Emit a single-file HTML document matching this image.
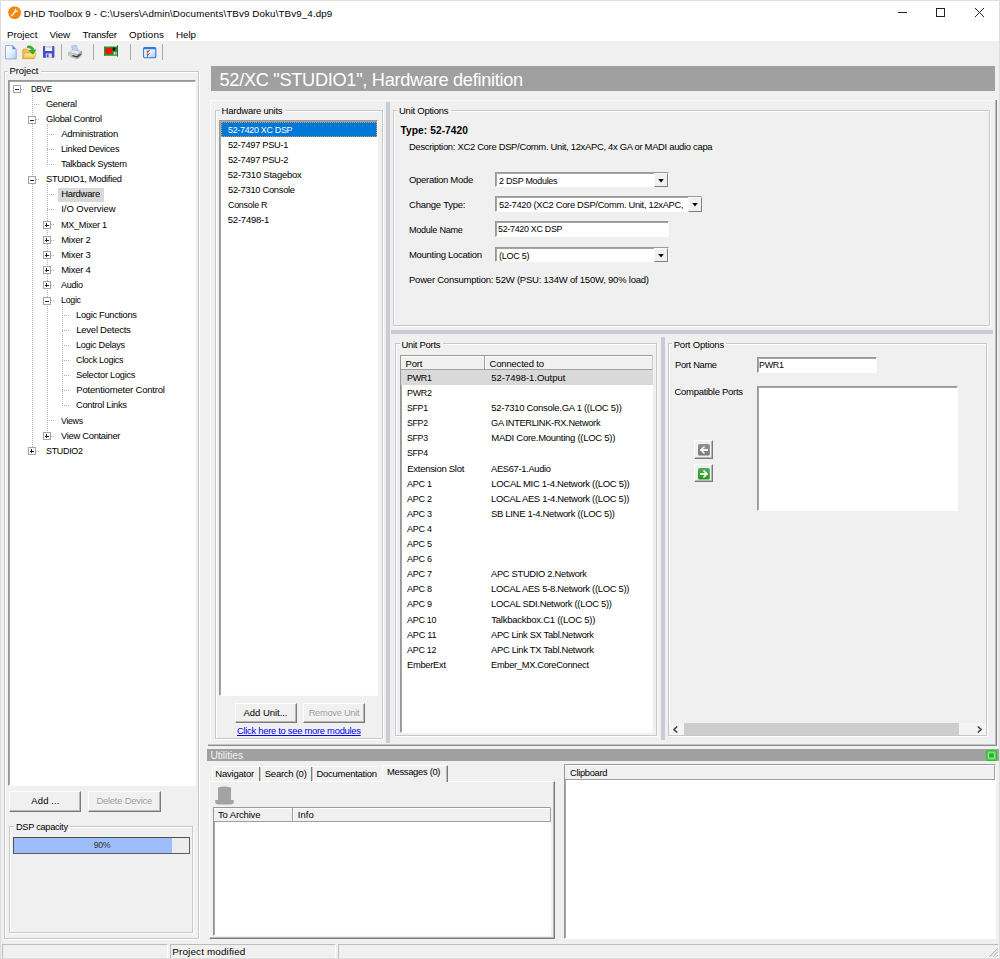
<!DOCTYPE html>
<html><head><meta charset="utf-8"><title>DHD Toolbox 9</title>
<style>
html,body{margin:0;padding:0}
body{width:1000px;height:959px;background:#f0f0f0;position:relative;overflow:hidden;font-family:"Liberation Sans",sans-serif;font-size:9.5px;color:#000}
div,span,svg{position:absolute;display:block}
span{white-space:nowrap}
</style></head><body>
<div style="left:0px;top:0px;width:1000px;height:41px;background:#fff"></div>
<svg style="left:7.6px;top:6.2px" width="14" height="14" viewBox="0 0 14 14"><circle cx="6.6" cy="6.6" r="6.45" fill="#f5870f"/><path d="M3.6 9.8 L6.9 5.8" stroke="#f3ede6" stroke-width="1.5" stroke-linecap="round"/><path d="M6.9 5.8 L7.6 3.2 M6.9 5.8 L9.6 4.9" stroke="#f3ede6" stroke-width="1.3" stroke-linecap="round"/></svg>
<span style="left:23.8px;top:7.20px;line-height:13px;font-size:9.8px;color:#000;letter-spacing:0.108px;">DHD Toolbox 9 - C:\Users\Admin\Documents\TBv9 Doku\TBv9_4.dp9</span>
<div style="left:898px;top:12px;width:9px;height:1px;background:#222"></div>
<div style="left:936px;top:8px;width:9px;height:9px;border:1px solid #222;box-sizing:border-box"></div>
<svg style="left:974px;top:7px" width="11" height="11" viewBox="0 0 11 11"><path d="M1 1 L10 10 M10 1 L1 10" stroke="#222" stroke-width="1" fill="none"/></svg>
<span style="left:7px;top:27.70px;line-height:13px;font-size:9.8px;color:#000;letter-spacing:0.000px;">Project</span>
<span style="left:49.5px;top:27.70px;line-height:13px;font-size:9.8px;color:#000;letter-spacing:-0.188px;">View</span>
<span style="left:82.5px;top:27.70px;line-height:13px;font-size:9.8px;color:#000;letter-spacing:-0.232px;">Transfer</span>
<span style="left:129px;top:27.70px;line-height:13px;font-size:9.8px;color:#000;letter-spacing:0.206px;">Options</span>
<span style="left:176px;top:27.70px;line-height:13px;font-size:9.8px;color:#000;letter-spacing:-0.052px;">Help</span>
<svg style="left:4.8px;top:44.8px" width="12" height="15" viewBox="0 0 12 15"><defs><linearGradient id="gd" x1="0" y1="0" x2="1" y2="1"><stop offset="0" stop-color="#ffffff"/><stop offset="0.55" stop-color="#e4f0fd"/><stop offset="1" stop-color="#a9cdf6"/></linearGradient></defs><path d="M0.5 0.5 H7.6 L11.2 4.1 V13.9 H0.5z" fill="url(#gd)" stroke="#93a3dd" stroke-width="0.9"/><path d="M7.4 0.6 L11.1 4.3 H7.4z" fill="#5a8be2"/></svg>
<svg style="left:22px;top:44.6px" width="15" height="15" viewBox="0 0 15 15"><defs><linearGradient id="gf" x1="0" y1="0" x2="0" y2="1"><stop offset="0" stop-color="#fdf0b0"/><stop offset="1" stop-color="#f0c040"/></linearGradient></defs><path d="M0.8 5 Q0.8 4 1.8 4 H4.6 L6 5.5 H11 Q12 5.5 12 6.5 V13.4 H0.8z" fill="#efc24a" stroke="#d2a02c" stroke-width="0.7"/><path d="M2.6 8 H13.4 Q14.4 8 14 9 L12.3 13.6 H0.8z" fill="url(#gf)" stroke="#d2a02c" stroke-width="0.7"/><path d="M5.3 1.3 C8.8 0 11.8 2.2 11.9 5.2 L14 4.8 L10.9 9.2 L7.2 5.6 L9.4 5.5 C9.2 3.6 7.6 2.5 5.3 2.9z" fill="#35b028" stroke="#218a18" stroke-width="0.5"/></svg>
<svg style="left:42.7px;top:45.8px" width="12" height="12" viewBox="0 0 12 12"><rect x="0" y="0" width="11.4" height="11.8" rx="0.9" fill="#484ec3"/><rect x="2.1" y="0.3" width="7.1" height="4.7" fill="#f3f3f3"/><rect x="2.1" y="0.3" width="7.1" height="1.6" fill="#d4d4d8"/><rect x="2.8" y="7.5" width="6" height="4.3" fill="#e3e4f8"/><rect x="3.7" y="8.3" width="1.9" height="2.9" fill="#484ec3"/></svg>
<div style="left:61px;top:44px;width:1px;height:15.5px;background:#a8a8a8"></div>
<svg style="left:67.6px;top:45px" width="15" height="15" viewBox="0 0 15 15"><path d="M3.6 0.9 L8.3 0.4 L10.2 5.8 L5 6.6z" fill="#b9d6f9" stroke="#86acdf" stroke-width="0.6"/><path d="M0.6 7.6 L4.6 5 L13.6 6.4 L9.8 9.6z" fill="#ececec" stroke="#a6a6a6" stroke-width="0.5"/><path d="M0.6 7.6 L9.8 9.6 V13.4 L0.6 10.6z" fill="#cfcfcf" stroke="#9a9a9a" stroke-width="0.5"/><path d="M9.8 9.6 L13.6 6.4 V9.8 L9.8 13.4z" fill="#9c9c9c" stroke="#8a8a8a" stroke-width="0.5"/><path d="M4.4 10.6 L9 11.8 L12.6 9.4" stroke="#333" stroke-width="1.1" fill="none"/><path d="M2.2 11.6 L8.4 13.4 L9.4 14 L3 12.4z" fill="#f6f6f6" stroke="#aaa" stroke-width="0.4"/></svg>
<div style="left:93px;top:44px;width:1px;height:15.5px;background:#a8a8a8"></div>
<svg style="left:104.3px;top:45.4px" width="14" height="12" viewBox="0 0 14 12"><rect x="0.2" y="1.5" width="13.2" height="9.3" fill="#1fa325"/><path d="M1.2 5 L2.8 2.4 L4.8 3.2 L7 2.2 L8.6 3.6 L8.2 6.4 L9 9 L6.6 8.6 L4.6 10 L3 8.6 L1.4 8.4z" fill="#fa1010"/><rect x="8.6" y="2.6" width="2.8" height="3" fill="#0a0a0a"/><rect x="9.8" y="7" width="1.2" height="2.6" fill="#e8e8e8"/><rect x="11.6" y="7" width="1" height="2.6" fill="#e8e8e8"/><rect x="0.2" y="1.5" width="1" height="9.3" fill="#156d18" opacity="0.6"/><rect x="13" y="0.2" width="0.7" height="11.4" fill="#222"/></svg>
<div style="left:130px;top:44px;width:1px;height:15.5px;background:#a8a8a8"></div>
<svg style="left:143px;top:46.6px" width="14" height="12" viewBox="0 0 14 12"><defs><linearGradient id="gw" x1="0" y1="0" x2="1" y2="1"><stop offset="0" stop-color="#ffffff"/><stop offset="0.5" stop-color="#e8f2fd"/><stop offset="1" stop-color="#9cc6f4"/></linearGradient></defs><rect x="0.6" y="0.6" width="12.2" height="10.2" rx="1.4" fill="url(#gw)" stroke="#2a78e2" stroke-width="1.1"/><rect x="0.6" y="0.4" width="12.2" height="1.8" rx="0.8" fill="#2a78e2"/><path d="M4.4 3.2 V10" stroke="#8a8a8a" stroke-width="0.9"/><path d="M3.6 4.4 L4.6 5.4 L6.6 3 M3.6 7.6 L4.6 8.6 L6.6 6.2" stroke="#b5331e" stroke-width="1" fill="none"/></svg>
<div style="left:161.5px;top:44px;width:1px;height:15.5px;background:#a8a8a8"></div>
<div style="left:5px;top:71.5px;width:195px;height:868.5px;border:1px solid #fff;box-sizing:border-box"></div>
<div style="left:4px;top:70.5px;width:195px;height:868.5px;border:1px solid #c8c8c8;box-sizing:border-box"></div>
<div style="left:7.5px;top:65.5px;width:33px;height:11px;background:#f0f0f0"></div>
<span style="left:9.5px;top:64.61px;line-height:12px;font-size:9.5px;color:#000;letter-spacing:-0.096px;">Project</span>
<div style="left:8px;top:80px;width:188px;height:706px;background:#fff;box-sizing:border-box;border-top:1px solid #989898;border-left:1px solid #989898;border-right:1px solid #fdfdfd;border-bottom:1px solid #fdfdfd;box-shadow:inset 1px 1px 0 rgba(105,105,105,0.6)"></div>
<div style="left:32px;top:94px;width:1px;height:357px;background-image:repeating-linear-gradient(to bottom,#b4b4b4 0,#b4b4b4 1px,transparent 1px,transparent 2px)"></div>
<div style="left:47px;top:124px;width:1px;height:40px;background-image:repeating-linear-gradient(to bottom,#b4b4b4 0,#b4b4b4 1px,transparent 1px,transparent 2px)"></div>
<div style="left:47px;top:184px;width:1px;height:251px;background-image:repeating-linear-gradient(to bottom,#b4b4b4 0,#b4b4b4 1px,transparent 1px,transparent 2px)"></div>
<div style="left:62px;top:305px;width:1px;height:101px;background-image:repeating-linear-gradient(to bottom,#b4b4b4 0,#b4b4b4 1px,transparent 1px,transparent 2px)"></div>
<div style="left:21px;top:89px;width:4px;height:1px;background-image:repeating-linear-gradient(to right,#b4b4b4 0,#b4b4b4 1px,transparent 1px,transparent 2px)"></div>
<div style="left:12.5px;top:85px;width:8px;height:8px;background:#fff;border:1px solid #a4a4a4;box-sizing:border-box"><div style="left:1px;top:2.5px;width:4px;height:1px;background:#222"></div></div>
<span style="left:31.0px;top:82.81px;line-height:12px;font-size:9.5px;color:#000;transform-origin:0 50%;transform:scaleX(0.8408);letter-spacing:-0.300px;">DBVE</span>
<div style="left:32px;top:104px;width:8px;height:1px;background-image:repeating-linear-gradient(to right,#b4b4b4 0,#b4b4b4 1px,transparent 1px,transparent 2px)"></div>
<span style="left:46.1px;top:97.89px;line-height:12px;font-size:9.5px;color:#000;transform-origin:0 50%;transform:scaleX(0.9684);letter-spacing:-0.300px;">General</span>
<div style="left:32px;top:119px;width:8px;height:1px;background-image:repeating-linear-gradient(to right,#b4b4b4 0,#b4b4b4 1px,transparent 1px,transparent 2px)"></div>
<div style="left:27.5px;top:116px;width:8px;height:8px;background:#fff;border:1px solid #a4a4a4;box-sizing:border-box"><div style="left:1px;top:2.5px;width:4px;height:1px;background:#222"></div></div>
<span style="left:46.1px;top:112.97px;line-height:12px;font-size:9.5px;color:#000;transform-origin:0 50%;transform:scaleX(0.9853);letter-spacing:-0.300px;">Global Control</span>
<div style="left:47px;top:134px;width:8px;height:1px;background-image:repeating-linear-gradient(to right,#b4b4b4 0,#b4b4b4 1px,transparent 1px,transparent 2px)"></div>
<span style="left:61.2px;top:128.05px;line-height:12px;font-size:9.5px;color:#000;letter-spacing:-0.246px;">Administration</span>
<div style="left:47px;top:149px;width:8px;height:1px;background-image:repeating-linear-gradient(to right,#b4b4b4 0,#b4b4b4 1px,transparent 1px,transparent 2px)"></div>
<span style="left:61.2px;top:143.13px;line-height:12px;font-size:9.5px;color:#000;transform-origin:0 50%;transform:scaleX(0.9666);letter-spacing:-0.300px;">Linked Devices</span>
<div style="left:47px;top:164px;width:8px;height:1px;background-image:repeating-linear-gradient(to right,#b4b4b4 0,#b4b4b4 1px,transparent 1px,transparent 2px)"></div>
<span style="left:61.2px;top:158.21px;line-height:12px;font-size:9.5px;color:#000;transform-origin:0 50%;transform:scaleX(0.9839);letter-spacing:-0.300px;">Talkback System</span>
<div style="left:32px;top:179px;width:8px;height:1px;background-image:repeating-linear-gradient(to right,#b4b4b4 0,#b4b4b4 1px,transparent 1px,transparent 2px)"></div>
<div style="left:27.5px;top:176px;width:8px;height:8px;background:#fff;border:1px solid #a4a4a4;box-sizing:border-box"><div style="left:1px;top:2.5px;width:4px;height:1px;background:#222"></div></div>
<span style="left:46.1px;top:173.29px;line-height:12px;font-size:9.5px;color:#000;transform-origin:0 50%;transform:scaleX(0.9797);letter-spacing:-0.300px;">STUDIO1, Modified</span>
<div style="left:47px;top:194px;width:8px;height:1px;background-image:repeating-linear-gradient(to right,#b4b4b4 0,#b4b4b4 1px,transparent 1px,transparent 2px)"></div>
<div style="left:58px;top:187.5px;width:46px;height:14px;background:#d9d9d9"></div>
<span style="left:61.2px;top:188.37px;line-height:12px;font-size:9.5px;color:#000;letter-spacing:-0.300px;">Hardware</span>
<div style="left:47px;top:209px;width:8px;height:1px;background-image:repeating-linear-gradient(to right,#b4b4b4 0,#b4b4b4 1px,transparent 1px,transparent 2px)"></div>
<span style="left:61.2px;top:203.45px;line-height:12px;font-size:9.5px;color:#000;letter-spacing:-0.037px;">I/O Overview</span>
<div style="left:47px;top:224px;width:8px;height:1px;background-image:repeating-linear-gradient(to right,#b4b4b4 0,#b4b4b4 1px,transparent 1px,transparent 2px)"></div>
<div style="left:42.5px;top:221px;width:8px;height:8px;background:#fff;border:1px solid #a4a4a4;box-sizing:border-box"><div style="left:1px;top:2.5px;width:4px;height:1px;background:#222"></div><div style="left:2.5px;top:1px;width:1px;height:4px;background:#222"></div></div>
<span style="left:61.2px;top:218.53px;line-height:12px;font-size:9.5px;color:#000;transform-origin:0 50%;transform:scaleX(0.9586);letter-spacing:-0.300px;">MX_Mixer 1</span>
<div style="left:47px;top:240px;width:8px;height:1px;background-image:repeating-linear-gradient(to right,#b4b4b4 0,#b4b4b4 1px,transparent 1px,transparent 2px)"></div>
<div style="left:42.5px;top:236px;width:8px;height:8px;background:#fff;border:1px solid #a4a4a4;box-sizing:border-box"><div style="left:1px;top:2.5px;width:4px;height:1px;background:#222"></div><div style="left:2.5px;top:1px;width:1px;height:4px;background:#222"></div></div>
<span style="left:61.2px;top:233.61px;line-height:12px;font-size:9.5px;color:#000;letter-spacing:-0.276px;">Mixer 2</span>
<div style="left:47px;top:255px;width:8px;height:1px;background-image:repeating-linear-gradient(to right,#b4b4b4 0,#b4b4b4 1px,transparent 1px,transparent 2px)"></div>
<div style="left:42.5px;top:251px;width:8px;height:8px;background:#fff;border:1px solid #a4a4a4;box-sizing:border-box"><div style="left:1px;top:2.5px;width:4px;height:1px;background:#222"></div><div style="left:2.5px;top:1px;width:1px;height:4px;background:#222"></div></div>
<span style="left:61.2px;top:248.69px;line-height:12px;font-size:9.5px;color:#000;letter-spacing:-0.276px;">Mixer 3</span>
<div style="left:47px;top:270px;width:8px;height:1px;background-image:repeating-linear-gradient(to right,#b4b4b4 0,#b4b4b4 1px,transparent 1px,transparent 2px)"></div>
<div style="left:42.5px;top:266px;width:8px;height:8px;background:#fff;border:1px solid #a4a4a4;box-sizing:border-box"><div style="left:1px;top:2.5px;width:4px;height:1px;background:#222"></div><div style="left:2.5px;top:1px;width:1px;height:4px;background:#222"></div></div>
<span style="left:61.2px;top:263.77px;line-height:12px;font-size:9.5px;color:#000;letter-spacing:-0.276px;">Mixer 4</span>
<div style="left:47px;top:285px;width:8px;height:1px;background-image:repeating-linear-gradient(to right,#b4b4b4 0,#b4b4b4 1px,transparent 1px,transparent 2px)"></div>
<div style="left:42.5px;top:281px;width:8px;height:8px;background:#fff;border:1px solid #a4a4a4;box-sizing:border-box"><div style="left:1px;top:2.5px;width:4px;height:1px;background:#222"></div><div style="left:2.5px;top:1px;width:1px;height:4px;background:#222"></div></div>
<span style="left:61.2px;top:278.85px;line-height:12px;font-size:9.5px;color:#000;transform-origin:0 50%;transform:scaleX(0.9519);letter-spacing:-0.300px;">Audio</span>
<div style="left:47px;top:300px;width:8px;height:1px;background-image:repeating-linear-gradient(to right,#b4b4b4 0,#b4b4b4 1px,transparent 1px,transparent 2px)"></div>
<div style="left:42.5px;top:297px;width:8px;height:8px;background:#fff;border:1px solid #a4a4a4;box-sizing:border-box"><div style="left:1px;top:2.5px;width:4px;height:1px;background:#222"></div></div>
<span style="left:61.2px;top:293.93px;line-height:12px;font-size:9.5px;color:#000;transform-origin:0 50%;transform:scaleX(0.9294);letter-spacing:-0.300px;">Logic</span>
<div style="left:62px;top:315px;width:8px;height:1px;background-image:repeating-linear-gradient(to right,#b4b4b4 0,#b4b4b4 1px,transparent 1px,transparent 2px)"></div>
<span style="left:76.3px;top:309.01px;line-height:12px;font-size:9.5px;color:#000;transform-origin:0 50%;transform:scaleX(0.9784);letter-spacing:-0.300px;">Logic Functions</span>
<div style="left:62px;top:330px;width:8px;height:1px;background-image:repeating-linear-gradient(to right,#b4b4b4 0,#b4b4b4 1px,transparent 1px,transparent 2px)"></div>
<span style="left:76.3px;top:324.09px;line-height:12px;font-size:9.5px;color:#000;letter-spacing:-0.255px;">Level Detects</span>
<div style="left:62px;top:345px;width:8px;height:1px;background-image:repeating-linear-gradient(to right,#b4b4b4 0,#b4b4b4 1px,transparent 1px,transparent 2px)"></div>
<span style="left:76.3px;top:339.17px;line-height:12px;font-size:9.5px;color:#000;transform-origin:0 50%;transform:scaleX(0.9591);letter-spacing:-0.300px;">Logic Delays</span>
<div style="left:62px;top:360px;width:8px;height:1px;background-image:repeating-linear-gradient(to right,#b4b4b4 0,#b4b4b4 1px,transparent 1px,transparent 2px)"></div>
<span style="left:76.3px;top:354.25px;line-height:12px;font-size:9.5px;color:#000;transform-origin:0 50%;transform:scaleX(0.9395);letter-spacing:-0.300px;">Clock Logics</span>
<div style="left:62px;top:375px;width:8px;height:1px;background-image:repeating-linear-gradient(to right,#b4b4b4 0,#b4b4b4 1px,transparent 1px,transparent 2px)"></div>
<span style="left:76.3px;top:369.33px;line-height:12px;font-size:9.5px;color:#000;transform-origin:0 50%;transform:scaleX(0.9794);letter-spacing:-0.300px;">Selector Logics</span>
<div style="left:62px;top:390px;width:8px;height:1px;background-image:repeating-linear-gradient(to right,#b4b4b4 0,#b4b4b4 1px,transparent 1px,transparent 2px)"></div>
<span style="left:76.3px;top:384.41px;line-height:12px;font-size:9.5px;color:#000;letter-spacing:-0.186px;">Potentiometer Control</span>
<div style="left:62px;top:405px;width:8px;height:1px;background-image:repeating-linear-gradient(to right,#b4b4b4 0,#b4b4b4 1px,transparent 1px,transparent 2px)"></div>
<span style="left:76.3px;top:399.49px;line-height:12px;font-size:9.5px;color:#000;transform-origin:0 50%;transform:scaleX(0.9835);letter-spacing:-0.300px;">Control Links</span>
<div style="left:47px;top:420px;width:8px;height:1px;background-image:repeating-linear-gradient(to right,#b4b4b4 0,#b4b4b4 1px,transparent 1px,transparent 2px)"></div>
<span style="left:61.2px;top:414.57px;line-height:12px;font-size:9.5px;color:#000;transform-origin:0 50%;transform:scaleX(0.9177);letter-spacing:-0.300px;">Views</span>
<div style="left:47px;top:436px;width:8px;height:1px;background-image:repeating-linear-gradient(to right,#b4b4b4 0,#b4b4b4 1px,transparent 1px,transparent 2px)"></div>
<div style="left:42.5px;top:432px;width:8px;height:8px;background:#fff;border:1px solid #a4a4a4;box-sizing:border-box"><div style="left:1px;top:2.5px;width:4px;height:1px;background:#222"></div><div style="left:2.5px;top:1px;width:1px;height:4px;background:#222"></div></div>
<span style="left:61.2px;top:429.65px;line-height:12px;font-size:9.5px;color:#000;transform-origin:0 50%;transform:scaleX(0.9857);letter-spacing:-0.300px;">View Container</span>
<div style="left:32px;top:451px;width:8px;height:1px;background-image:repeating-linear-gradient(to right,#b4b4b4 0,#b4b4b4 1px,transparent 1px,transparent 2px)"></div>
<div style="left:27.5px;top:447px;width:8px;height:8px;background:#fff;border:1px solid #a4a4a4;box-sizing:border-box"><div style="left:1px;top:2.5px;width:4px;height:1px;background:#222"></div><div style="left:2.5px;top:1px;width:1px;height:4px;background:#222"></div></div>
<span style="left:46.1px;top:444.73px;line-height:12px;font-size:9.5px;color:#000;transform-origin:0 50%;transform:scaleX(0.9394);letter-spacing:-0.300px;">STUDIO2</span>
<div style="left:9.4px;top:791px;width:72px;height:20.5px;background:#f0f0f0;box-sizing:border-box;border-top:1px solid #fff;border-left:1px solid #fff;border-right:1px solid #7a7a7a;border-bottom:1px solid #7a7a7a;box-shadow:inset -1px -1px 0 #b8b8b8"></div>
<span style="left:45.4px;top:795.36px;line-height:12px;font-size:9.5px;color:#000;transform-origin:50% 50%;transform:translateX(-50%);letter-spacing:0.089px;">Add ...</span>
<div style="left:88px;top:791px;width:72.5px;height:20.5px;background:#f0f0f0;box-sizing:border-box;border-top:1px solid #fff;border-left:1px solid #fff;border-right:1px solid #7a7a7a;border-bottom:1px solid #7a7a7a;box-shadow:inset -1px -1px 0 #b8b8b8"></div>
<span style="left:124.75px;top:795.86px;line-height:12px;font-size:9.5px;color:#fff;transform-origin:50% 50%;transform:translateX(-50%);letter-spacing:-0.262px;">Delete Device</span>
<span style="left:124.25px;top:795.36px;line-height:12px;font-size:9.5px;color:#9a9a9a;transform-origin:50% 50%;transform:translateX(-50%);letter-spacing:-0.262px;">Delete Device</span>
<div style="left:10px;top:827.4px;width:184.4px;height:106.4px;border:1px solid #fff;box-sizing:border-box"></div>
<div style="left:9px;top:826.4px;width:184.4px;height:106.4px;border:1px solid #c8c8c8;box-sizing:border-box"></div>
<div style="left:13.5px;top:821.4px;width:56px;height:11px;background:#f0f0f0"></div>
<span style="left:15.5px;top:821.31px;line-height:12px;font-size:9.5px;color:#000;transform-origin:0 50%;transform:scaleX(0.9709);letter-spacing:-0.300px;">DSP capacity</span>
<div style="left:13px;top:837px;width:177px;height:16.5px;background:#ececec;box-sizing:border-box;border:1px solid #505050;border-right-color:#5c5c5c;border-bottom-color:#5c5c5c"></div>
<div style="left:14px;top:838px;width:157.5px;height:14.5px;background:#9dbdfb"></div>
<span style="left:101.5px;top:839.31px;line-height:12px;font-size:9.5px;color:#333;transform-origin:50% 50%;transform:translateX(-50%) scaleX(0.9231);letter-spacing:-0.300px;">90%</span>
<div style="left:211px;top:66px;width:784px;height:24.7px;background:#a0a0a0"></div>
<span style="left:219.5px;top:67.54px;line-height:24px;font-size:18.2px;color:#fff;letter-spacing:-0.300px;">52/XC &quot;STUDIO1&quot;, Hardware definition</span>
<div style="left:210px;top:100px;width:786px;height:1px;background:#fafafa"></div>
<div style="left:210px;top:100px;width:1px;height:645px;background:#fafafa"></div>
<div style="left:995px;top:100px;width:1px;height:645px;background:#bcbcbc"></div>
<div style="left:996px;top:100px;width:1px;height:646px;background:#858585"></div>
<div style="left:208px;top:744px;width:788px;height:1px;background:#c4c4c4"></div>
<div style="left:208px;top:745px;width:789px;height:1px;background:#8c8c8c"></div>
<div style="left:216px;top:111px;width:167.6px;height:629.2px;border:1px solid #fff;box-sizing:border-box"></div>
<div style="left:215px;top:110px;width:167.6px;height:629.2px;border:1px solid #c8c8c8;box-sizing:border-box"></div>
<div style="left:219.6px;top:105px;width:65px;height:11px;background:#f0f0f0"></div>
<span style="left:221.6px;top:105.21px;line-height:12px;font-size:9.5px;color:#000;letter-spacing:-0.222px;">Hardware units</span>
<div style="left:219.4px;top:120.4px;width:158.6px;height:576px;background:#fff;box-sizing:border-box;border-top:1px solid #989898;border-left:1px solid #989898;border-right:1px solid #fdfdfd;border-bottom:1px solid #fdfdfd;box-shadow:inset 1px 1px 0 rgba(105,105,105,0.6)"></div>
<div style="left:221px;top:122px;width:156.4px;height:14.6px;background:#0078d7;outline:1px dotted #d89a4a;outline-offset:-1px"></div>
<span style="left:227.8px;top:123.51px;line-height:12px;font-size:9.5px;color:#fff;transform-origin:0 50%;transform:scaleX(0.9351);letter-spacing:-0.300px;">52-7420 XC DSP</span>
<span style="left:227.8px;top:138.59px;line-height:12px;font-size:9.5px;color:#000;transform-origin:0 50%;transform:scaleX(0.9776);letter-spacing:-0.300px;">52-7497 PSU-1</span>
<span style="left:227.8px;top:153.67px;line-height:12px;font-size:9.5px;color:#000;transform-origin:0 50%;transform:scaleX(0.9776);letter-spacing:-0.300px;">52-7497 PSU-2</span>
<span style="left:227.8px;top:168.75px;line-height:12px;font-size:9.5px;color:#000;letter-spacing:-0.244px;">52-7310 Stagebox</span>
<span style="left:227.8px;top:183.83px;line-height:12px;font-size:9.5px;color:#000;transform-origin:0 50%;transform:scaleX(0.9830);letter-spacing:-0.300px;">52-7310 Console</span>
<span style="left:227.8px;top:198.91px;line-height:12px;font-size:9.5px;color:#000;transform-origin:0 50%;transform:scaleX(0.9414);letter-spacing:-0.300px;">Console R</span>
<span style="left:227.8px;top:213.99px;line-height:12px;font-size:9.5px;color:#000;letter-spacing:-0.227px;">52-7498-1</span>
<div style="left:234.5px;top:703.3px;width:62px;height:19.7px;background:#f0f0f0;box-sizing:border-box;border-top:1px solid #fff;border-left:1px solid #fff;border-right:1px solid #7a7a7a;border-bottom:1px solid #7a7a7a;box-shadow:inset -1px -1px 0 #b8b8b8"></div>
<span style="left:265.5px;top:707.26px;line-height:12px;font-size:9.5px;color:#000;transform-origin:50% 50%;transform:translateX(-50%);letter-spacing:-0.036px;">Add Unit...</span>
<div style="left:302.5px;top:703.3px;width:62.3px;height:19.7px;background:#f0f0f0;box-sizing:border-box;border-top:1px solid #fff;border-left:1px solid #fff;border-right:1px solid #7a7a7a;border-bottom:1px solid #7a7a7a;box-shadow:inset -1px -1px 0 #b8b8b8"></div>
<span style="left:334.15px;top:707.76px;line-height:12px;font-size:9.5px;color:#fff;transform-origin:50% 50%;transform:translateX(-50%) scaleX(0.9822);letter-spacing:-0.300px;">Remove Unit</span>
<span style="left:333.65px;top:707.26px;line-height:12px;font-size:9.5px;color:#9a9a9a;transform-origin:50% 50%;transform:translateX(-50%) scaleX(0.9822);letter-spacing:-0.300px;">Remove Unit</span>
<span style="left:237px;top:725.41px;line-height:12px;font-size:9.5px;color:#0000ee;transform-origin:0 50%;transform:scaleX(0.9928);letter-spacing:-0.300px;text-decoration:underline;">Click here to see more modules</span>
<div style="left:386.3px;top:102px;width:3.7px;height:640.5px;background:#c9ccd3"></div>
<div style="left:394px;top:111px;width:597px;height:216.3px;border:1px solid #fff;box-sizing:border-box"></div>
<div style="left:393px;top:110px;width:597px;height:216.3px;border:1px solid #c8c8c8;box-sizing:border-box"></div>
<div style="left:397px;top:105px;width:53.5px;height:11px;background:#f0f0f0"></div>
<span style="left:399px;top:105.41px;line-height:12px;font-size:9.5px;color:#000;letter-spacing:-0.253px;">Unit Options</span>
<span style="left:400.5px;top:124.00px;line-height:13px;font-size:10.2px;color:#000;font-weight:bold;letter-spacing:0.072px;">Type: 52-7420</span>
<span style="left:409px;top:140.71px;line-height:12px;font-size:9.5px;color:#000;transform-origin:0 50%;transform:scaleX(0.9900);letter-spacing:-0.300px;">Description: XC2 Core DSP/Comm. Unit, 12xAPC, 4x GA or MADI audio capa</span>
<span style="left:409px;top:173.51px;line-height:12px;font-size:9.5px;color:#000;letter-spacing:-0.300px;">Operation Mode</span>
<span style="left:409px;top:198.61px;line-height:12px;font-size:9.5px;color:#000;letter-spacing:-0.226px;">Change Type:</span>
<span style="left:409px;top:223.61px;line-height:12px;font-size:9.5px;color:#000;transform-origin:0 50%;transform:scaleX(0.9583);letter-spacing:-0.300px;">Module Name</span>
<span style="left:409px;top:248.61px;line-height:12px;font-size:9.5px;color:#000;letter-spacing:-0.290px;">Mounting Location</span>
<span style="left:409px;top:273.71px;line-height:12px;font-size:9.5px;color:#000;letter-spacing:-0.222px;">Power Consumption: 52W (PSU: 134W of 150W, 90% load)</span>
<div style="left:495px;top:171.5px;width:173.5px;height:15.5px;background:#fff;box-sizing:border-box;border-top:1px solid #989898;border-left:1px solid #989898;border-right:1px solid #fdfdfd;border-bottom:1px solid #fdfdfd;box-shadow:inset 1px 1px 0 rgba(105,105,105,0.6)"></div>
<div style="left:654.3px;top:172.5px;width:14.2px;height:14.5px;background:#f0f0f0;box-sizing:border-box;border-top:1px solid #fafafa;border-left:1px solid #fafafa;border-right:1.4px solid #7e7e7e;border-bottom:1.4px solid #7e7e7e"></div>
<svg style="left:658.30px;top:178.55px" width="6" height="4" viewBox="0 0 6 4"><path d="M0.2 0 H5.8 L3 3.5z" fill="#000"/></svg>
<span style="left:498.5px;top:174.61px;line-height:12px;font-size:9.5px;color:#000;transform-origin:0 50%;transform:scaleX(0.9399);letter-spacing:-0.300px;">2 DSP Modules</span>
<div style="left:495px;top:196.3px;width:207.3px;height:15.5px;background:#fff;box-sizing:border-box;border-top:1px solid #989898;border-left:1px solid #989898;border-right:1px solid #fdfdfd;border-bottom:1px solid #fdfdfd;box-shadow:inset 1px 1px 0 rgba(105,105,105,0.6)"></div>
<div style="left:688.0999999999999px;top:197.3px;width:14.2px;height:14.5px;background:#f0f0f0;box-sizing:border-box;border-top:1px solid #fafafa;border-left:1px solid #fafafa;border-right:1.4px solid #7e7e7e;border-bottom:1.4px solid #7e7e7e"></div>
<svg style="left:692.10px;top:203.35px" width="6" height="4" viewBox="0 0 6 4"><path d="M0.2 0 H5.8 L3 3.5z" fill="#000"/></svg>
<span style="left:498.5px;top:199.41px;line-height:12px;font-size:9.5px;color:#000;transform-origin:0 50%;transform:scaleX(0.9808);letter-spacing:-0.300px;">52-7420 (XC2 Core DSP/Comm. Unit, 12xAPC,</span>
<div style="left:495px;top:221px;width:173.7px;height:15.6px;background:#fff;box-sizing:border-box;border-top:1px solid #989898;border-left:1px solid #989898;border-right:1px solid #fdfdfd;border-bottom:1px solid #fdfdfd;box-shadow:inset 1px 1px 0 rgba(105,105,105,0.6)"></div>
<span style="left:498px;top:223.01px;line-height:12px;font-size:9.5px;color:#000;transform-origin:0 50%;transform:scaleX(0.9351);letter-spacing:-0.300px;">52-7420 XC DSP</span>
<div style="left:495px;top:246.5px;width:173.5px;height:15.5px;background:#fff;box-sizing:border-box;border-top:1px solid #989898;border-left:1px solid #989898;border-right:1px solid #fdfdfd;border-bottom:1px solid #fdfdfd;box-shadow:inset 1px 1px 0 rgba(105,105,105,0.6)"></div>
<div style="left:654.3px;top:247.5px;width:14.2px;height:14.5px;background:#f0f0f0;box-sizing:border-box;border-top:1px solid #fafafa;border-left:1px solid #fafafa;border-right:1.4px solid #7e7e7e;border-bottom:1.4px solid #7e7e7e"></div>
<svg style="left:658.30px;top:253.55px" width="6" height="4" viewBox="0 0 6 4"><path d="M0.2 0 H5.8 L3 3.5z" fill="#000"/></svg>
<span style="left:498.5px;top:249.61px;line-height:12px;font-size:9.5px;color:#000;transform-origin:0 50%;transform:scaleX(0.9532);letter-spacing:-0.300px;">(LOC 5)</span>
<div style="left:391px;top:330px;width:602px;height:3.7px;background:#c9ccd3"></div>
<div style="left:396px;top:344px;width:262.3px;height:393.3px;border:1px solid #fff;box-sizing:border-box"></div>
<div style="left:395px;top:343px;width:262.3px;height:393.3px;border:1px solid #c8c8c8;box-sizing:border-box"></div>
<div style="left:399.5px;top:338px;width:43px;height:11px;background:#f0f0f0"></div>
<span style="left:401.5px;top:339.11px;line-height:12px;font-size:9.5px;color:#000;letter-spacing:-0.300px;">Unit Ports</span>
<div style="left:400px;top:354.5px;width:253px;height:378px;background:#fff;box-sizing:border-box;border-top:1px solid #989898;border-left:1px solid #989898;border-right:1px solid #fdfdfd;border-bottom:1px solid #fdfdfd;box-shadow:inset 1px 1px 0 rgba(105,105,105,0.6)"></div>
<div style="left:401px;top:356px;width:251.5px;height:14px;background:#f0f0f0;box-sizing:border-box;border-bottom:1px solid #a0a0a0;border-top:1px solid #fff"></div>
<div style="left:484px;top:356px;width:1px;height:14px;background:#a0a0a0"></div>
<div style="left:485px;top:356px;width:1px;height:13px;background:#fff"></div>
<div style="left:651.5px;top:356px;width:1px;height:14px;background:#cacaca"></div>
<span style="left:405.5px;top:357.61px;line-height:12px;font-size:9.5px;color:#000;letter-spacing:-0.146px;">Port</span>
<span style="left:489.5px;top:357.61px;line-height:12px;font-size:9.5px;color:#000;letter-spacing:-0.183px;">Connected to</span>
<div style="left:401px;top:370.4px;width:251.5px;height:14.4px;background:#d9d9d9"></div>
<span style="left:407.3px;top:371.91px;line-height:12px;font-size:9.5px;color:#000;transform-origin:0 50%;transform:scaleX(0.9415);letter-spacing:-0.300px;">PWR1</span>
<span style="left:491.3px;top:371.91px;line-height:12px;font-size:9.5px;color:#000;letter-spacing:-0.032px;">52-7498-1.Output</span>
<span style="left:407.3px;top:387.01px;line-height:12px;font-size:9.5px;color:#000;transform-origin:0 50%;transform:scaleX(0.9415);letter-spacing:-0.300px;">PWR2</span>
<span style="left:407.3px;top:402.11px;line-height:12px;font-size:9.5px;color:#000;transform-origin:0 50%;transform:scaleX(0.9184);letter-spacing:-0.300px;">SFP1</span>
<span style="left:491.3px;top:402.11px;line-height:12px;font-size:9.5px;color:#000;letter-spacing:-0.289px;">52-7310 Console.GA 1 ((LOC 5))</span>
<span style="left:407.3px;top:417.21px;line-height:12px;font-size:9.5px;color:#000;transform-origin:0 50%;transform:scaleX(0.9184);letter-spacing:-0.300px;">SFP2</span>
<span style="left:491.3px;top:417.21px;line-height:12px;font-size:9.5px;color:#000;transform-origin:0 50%;transform:scaleX(0.9715);letter-spacing:-0.300px;">GA INTERLINK-RX.Network</span>
<span style="left:407.3px;top:432.31px;line-height:12px;font-size:9.5px;color:#000;transform-origin:0 50%;transform:scaleX(0.9184);letter-spacing:-0.300px;">SFP3</span>
<span style="left:491.3px;top:432.31px;line-height:12px;font-size:9.5px;color:#000;letter-spacing:-0.276px;">MADI Core.Mounting ((LOC 5))</span>
<span style="left:407.3px;top:447.41px;line-height:12px;font-size:9.5px;color:#000;transform-origin:0 50%;transform:scaleX(0.9184);letter-spacing:-0.300px;">SFP4</span>
<span style="left:407.3px;top:462.51px;line-height:12px;font-size:9.5px;color:#000;letter-spacing:-0.287px;">Extension Slot</span>
<span style="left:491.3px;top:462.51px;line-height:12px;font-size:9.5px;color:#000;transform-origin:0 50%;transform:scaleX(0.9777);letter-spacing:-0.300px;">AES67-1.Audio</span>
<span style="left:407.3px;top:477.61px;line-height:12px;font-size:9.5px;color:#000;transform-origin:0 50%;transform:scaleX(0.9517);letter-spacing:-0.300px;">APC 1</span>
<span style="left:491.3px;top:477.61px;line-height:12px;font-size:9.5px;color:#000;letter-spacing:-0.299px;">LOCAL MIC 1-4.Network ((LOC 5))</span>
<span style="left:407.3px;top:492.71px;line-height:12px;font-size:9.5px;color:#000;transform-origin:0 50%;transform:scaleX(0.9517);letter-spacing:-0.300px;">APC 2</span>
<span style="left:491.3px;top:492.71px;line-height:12px;font-size:9.5px;color:#000;transform-origin:0 50%;transform:scaleX(0.9926);letter-spacing:-0.300px;">LOCAL AES 1-4.Network ((LOC 5))</span>
<span style="left:407.3px;top:507.81px;line-height:12px;font-size:9.5px;color:#000;transform-origin:0 50%;transform:scaleX(0.9517);letter-spacing:-0.300px;">APC 3</span>
<span style="left:491.3px;top:507.81px;line-height:12px;font-size:9.5px;color:#000;transform-origin:0 50%;transform:scaleX(0.9948);letter-spacing:-0.300px;">SB LINE 1-4.Network ((LOC 5))</span>
<span style="left:407.3px;top:522.91px;line-height:12px;font-size:9.5px;color:#000;transform-origin:0 50%;transform:scaleX(0.9517);letter-spacing:-0.300px;">APC 4</span>
<span style="left:407.3px;top:538.01px;line-height:12px;font-size:9.5px;color:#000;transform-origin:0 50%;transform:scaleX(0.9517);letter-spacing:-0.300px;">APC 5</span>
<span style="left:407.3px;top:553.11px;line-height:12px;font-size:9.5px;color:#000;transform-origin:0 50%;transform:scaleX(0.9517);letter-spacing:-0.300px;">APC 6</span>
<span style="left:407.3px;top:568.21px;line-height:12px;font-size:9.5px;color:#000;transform-origin:0 50%;transform:scaleX(0.9517);letter-spacing:-0.300px;">APC 7</span>
<span style="left:491.3px;top:568.21px;line-height:12px;font-size:9.5px;color:#000;transform-origin:0 50%;transform:scaleX(0.9819);letter-spacing:-0.300px;">APC STUDIO 2.Network</span>
<span style="left:407.3px;top:583.31px;line-height:12px;font-size:9.5px;color:#000;transform-origin:0 50%;transform:scaleX(0.9517);letter-spacing:-0.300px;">APC 8</span>
<span style="left:491.3px;top:583.31px;line-height:12px;font-size:9.5px;color:#000;transform-origin:0 50%;transform:scaleX(0.9926);letter-spacing:-0.300px;">LOCAL AES 5-8.Network ((LOC 5))</span>
<span style="left:407.3px;top:598.41px;line-height:12px;font-size:9.5px;color:#000;transform-origin:0 50%;transform:scaleX(0.9517);letter-spacing:-0.300px;">APC 9</span>
<span style="left:491.3px;top:598.41px;line-height:12px;font-size:9.5px;color:#000;transform-origin:0 50%;transform:scaleX(0.9941);letter-spacing:-0.300px;">LOCAL SDI.Network ((LOC 5))</span>
<span style="left:407.3px;top:613.51px;line-height:12px;font-size:9.5px;color:#000;transform-origin:0 50%;transform:scaleX(0.9440);letter-spacing:-0.300px;">APC 10</span>
<span style="left:491.3px;top:613.51px;line-height:12px;font-size:9.5px;color:#000;letter-spacing:-0.253px;">Talkbackbox.C1 ((LOC 5))</span>
<span style="left:407.3px;top:628.61px;line-height:12px;font-size:9.5px;color:#000;transform-origin:0 50%;transform:scaleX(0.9657);letter-spacing:-0.300px;">APC 11</span>
<span style="left:491.3px;top:628.61px;line-height:12px;font-size:9.5px;color:#000;transform-origin:0 50%;transform:scaleX(0.9773);letter-spacing:-0.300px;">APC Link SX Tabl.Network</span>
<span style="left:407.3px;top:643.71px;line-height:12px;font-size:9.5px;color:#000;transform-origin:0 50%;transform:scaleX(0.9440);letter-spacing:-0.300px;">APC 12</span>
<span style="left:491.3px;top:643.71px;line-height:12px;font-size:9.5px;color:#000;transform-origin:0 50%;transform:scaleX(0.9838);letter-spacing:-0.300px;">APC Link TX Tabl.Network</span>
<span style="left:407.3px;top:658.81px;line-height:12px;font-size:9.5px;color:#000;transform-origin:0 50%;transform:scaleX(0.9844);letter-spacing:-0.300px;">EmberExt</span>
<span style="left:491.3px;top:658.81px;line-height:12px;font-size:9.5px;color:#000;transform-origin:0 50%;transform:scaleX(0.9757);letter-spacing:-0.300px;">Ember_MX.CoreConnect</span>
<div style="left:661.3px;top:337px;width:3.5px;height:403px;background:#c9ccd3"></div>
<div style="left:668.5px;top:344px;width:319.5px;height:393.3px;border:1px solid #fff;box-sizing:border-box"></div>
<div style="left:667.5px;top:343px;width:319.5px;height:393.3px;border:1px solid #c8c8c8;box-sizing:border-box"></div>
<div style="left:671.7px;top:338px;width:54.5px;height:11px;background:#f0f0f0"></div>
<span style="left:673.7px;top:339.11px;line-height:12px;font-size:9.5px;color:#000;letter-spacing:-0.210px;">Port Options</span>
<span style="left:674.5px;top:358.61px;line-height:12px;font-size:9.5px;color:#000;transform-origin:0 50%;transform:scaleX(0.9766);letter-spacing:-0.300px;">Port Name</span>
<div style="left:756.5px;top:356.5px;width:120.5px;height:16.5px;background:#fff;box-sizing:border-box;border-top:1px solid #989898;border-left:1px solid #989898;border-right:1px solid #fdfdfd;border-bottom:1px solid #fdfdfd;box-shadow:inset 1px 1px 0 rgba(105,105,105,0.6)"></div>
<span style="left:759px;top:358.81px;line-height:12px;font-size:9.5px;color:#000;transform-origin:0 50%;transform:scaleX(0.9415);letter-spacing:-0.300px;">PWR1</span>
<span style="left:674.5px;top:385.91px;line-height:12px;font-size:9.5px;color:#000;letter-spacing:-0.292px;">Compatible Ports</span>
<div style="left:756.5px;top:386.3px;width:201px;height:125px;background:#fff;box-sizing:border-box;border-top:1px solid #989898;border-left:1px solid #989898;border-right:1px solid #fdfdfd;border-bottom:1px solid #fdfdfd;box-shadow:inset 1px 1px 0 rgba(105,105,105,0.6)"></div>
<div style="left:694.4px;top:440.4px;width:19px;height:18.2px;background:#f0f0f0;box-sizing:border-box;border-top:1px solid #fff;border-left:1px solid #fff;border-right:1px solid #7a7a7a;border-bottom:1px solid #7a7a7a;box-shadow:inset -1px -1px 0 #b8b8b8"></div>
<svg style="left:698.3px;top:443.9px" width="12" height="12" viewBox="0 0 12 12"><defs><linearGradient id="gl" x1="0" y1="0" x2="0" y2="1"><stop offset="0" stop-color="#8f8f96"/><stop offset="1" stop-color="#7a7a72"/></linearGradient></defs><rect x="0" y="0" width="11.8" height="11.6" rx="1.6" fill="url(#gl)"/><path d="M1.8 6 L6 1.9 L7.1 3 L5 5.1 H10 V6.9 H5 L7.1 9 L6 10.1z" fill="#fff"/></svg>
<div style="left:694.4px;top:464.0px;width:19px;height:18.2px;background:#f0f0f0;box-sizing:border-box;border-top:1px solid #fff;border-left:1px solid #fff;border-right:1px solid #7a7a7a;border-bottom:1px solid #7a7a7a;box-shadow:inset -1px -1px 0 #b8b8b8"></div>
<svg style="left:698.3px;top:467.5px" width="12" height="12" viewBox="0 0 12 12"><defs><linearGradient id="gr" x1="0" y1="0" x2="0" y2="1"><stop offset="0" stop-color="#4fb04f"/><stop offset="1" stop-color="#1f981f"/></linearGradient></defs><rect x="0" y="0" width="11.8" height="11.6" rx="1.6" fill="url(#gr)"/><path d="M1.8 6 L6 1.9 L7.1 3 L5 5.1 H10 V6.9 H5 L7.1 9 L6 10.1z" fill="#fff" transform="translate(12 0) scale(-1 1)"/></svg>
<div style="left:669px;top:722.7px;width:317px;height:12.8px;background:#f4f4f4"></div>
<div style="left:683.5px;top:722.7px;width:275.5px;height:12.8px;background:#cdcdcd"></div>
<svg style="left:673px;top:726px" width="5" height="7" viewBox="0 0 5 7"><path d="M4.2 0.5 L1 3.5 L4.2 6.5" stroke="#4a4a4a" stroke-width="1.7" fill="none"/></svg>
<svg style="left:977px;top:726px" width="5" height="7" viewBox="0 0 5 7"><path d="M0.8 0.5 L4 3.5 L0.8 6.5" stroke="#4a4a4a" stroke-width="1.7" fill="none"/></svg>
<div style="left:207px;top:749px;width:793px;height:12.3px;background:#a0a0a0"></div>
<span style="left:210.5px;top:748.90px;line-height:13px;font-size:10.2px;color:#f4f4f4;letter-spacing:-0.043px;">Utilities</span>
<svg style="left:986px;top:750px" width="11" height="11" viewBox="0 0 11 11"><rect x="0.5" y="0.5" width="10" height="10" rx="1.4" fill="#4ad84a" stroke="#2cc02c"/><rect x="2.6" y="2.8" width="5.8" height="5.2" fill="#2fae2f" stroke="#9fee9f" stroke-width="0.9"/></svg>
<div style="left:208.5px;top:780.5px;width:346px;height:158px;background:#f0f0f0;box-sizing:border-box;border-top:1px solid #fff;border-left:1px solid #fff;border-right:1px solid #7a7a7a;border-bottom:1px solid #7a7a7a;box-shadow:inset -1px -1px 0 #b8b8b8"></div>
<span style="left:215.3px;top:767.81px;line-height:12px;font-size:9.5px;color:#000;letter-spacing:-0.209px;">Navigator</span>
<div style="left:212px;top:766px;width:169px;height:1px;background:#fbfbfb"></div>
<div style="left:212px;top:766px;width:1px;height:15px;background:#fbfbfb"></div>
<div style="left:259px;top:767px;width:1px;height:14px;background:#7c7c7c"></div>
<div style="left:260px;top:767px;width:1px;height:14px;background:#c8c8c8"></div>
<div style="left:261px;top:767px;width:1px;height:14px;background:#fbfbfb"></div>
<span style="left:264.8px;top:767.81px;line-height:12px;font-size:9.5px;color:#000;letter-spacing:-0.262px;">Search (0)</span>
<div style="left:311px;top:767px;width:1px;height:14px;background:#7c7c7c"></div>
<div style="left:312px;top:767px;width:1px;height:14px;background:#c8c8c8"></div>
<div style="left:313px;top:767px;width:1px;height:14px;background:#fbfbfb"></div>
<span style="left:316.5px;top:767.81px;line-height:12px;font-size:9.5px;color:#000;letter-spacing:-0.284px;">Documentation</span>
<div style="left:382px;top:764.5px;width:66px;height:17.5px;background:#f0f0f0;box-sizing:border-box;border-top:1px solid #fff;border-left:1px solid #fff;border-right:1px solid #7a7a7a;box-shadow:inset -1px 0 0 #b8b8b8"></div>
<span style="left:387.3px;top:766.41px;line-height:12px;font-size:9.5px;color:#000;transform-origin:0 50%;transform:scaleX(0.9859);letter-spacing:-0.300px;">Messages (0)</span>
<svg style="left:214px;top:785px" width="21" height="21" viewBox="0 0 21 21"><path d="M4 2.5 Q10.5 0.5 17 2.5 V15 H4z" fill="#a3a3a3"/><path d="M1.2 15 H19.8 Q20.5 19.5 16 19.5 H5 Q0.5 19.5 1.2 15z" fill="#a3a3a3"/></svg>
<div style="left:213px;top:807px;width:338px;height:128.5px;background:#fff;box-sizing:border-box;border-top:1px solid #989898;border-left:1px solid #989898;border-right:1px solid #fdfdfd;border-bottom:1px solid #fdfdfd;box-shadow:inset 1px 1px 0 rgba(105,105,105,0.6)"></div>
<div style="left:214px;top:808px;width:336px;height:14px;background:#f0f0f0;box-sizing:border-box;border-bottom:1px solid #a0a0a0;border-top:1px solid #fff"></div>
<div style="left:291.5px;top:808px;width:1px;height:14px;background:#a0a0a0"></div>
<div style="left:292.5px;top:808px;width:1px;height:13px;background:#fff"></div>
<div style="left:549.5px;top:808px;width:1px;height:14px;background:#a0a0a0"></div>
<span style="left:218px;top:809.41px;line-height:12px;font-size:9.5px;color:#000;letter-spacing:-0.148px;">To Archive</span>
<span style="left:297.8px;top:809.41px;line-height:12px;font-size:9.5px;color:#000;letter-spacing:0.047px;">Info</span>
<div style="left:564px;top:764px;width:432px;height:174.5px;background:#fff;box-sizing:border-box;border-top:1px solid #989898;border-left:1px solid #989898;border-right:1px solid #fdfdfd;border-bottom:1px solid #fdfdfd;box-shadow:inset 1px 1px 0 rgba(105,105,105,0.6)"></div>
<div style="left:565px;top:765px;width:430px;height:14.6px;background:#f0f0f0;box-sizing:border-box;border-bottom:1px solid #a0a0a0;border-top:1px solid #fff;border-right:1px solid #a0a0a0"></div>
<span style="left:569.8px;top:767.11px;line-height:12px;font-size:9.5px;color:#000;transform-origin:0 50%;transform:scaleX(0.9798);letter-spacing:-0.300px;">Clipboard</span>
<div style="left:2px;top:944px;width:166px;height:15px;background:#f0f0f0;box-sizing:border-box;border-top:1px solid #bdbdbd;border-left:1px solid #bdbdbd;border-right:1px solid #fff"></div>
<div style="left:170px;top:944px;width:166px;height:15px;background:#f0f0f0;box-sizing:border-box;border-top:1px solid #bdbdbd;border-left:1px solid #bdbdbd;border-right:1px solid #fff"></div>
<div style="left:338px;top:944px;width:661px;height:15px;background:#f0f0f0;box-sizing:border-box;border-top:1px solid #bdbdbd;border-left:1px solid #bdbdbd;border-right:1px solid #fff"></div>
<span style="left:172.3px;top:944.70px;line-height:13px;font-size:9.9px;color:#000;letter-spacing:0.146px;">Project modified</span>
<svg style="left:988px;top:947px" width="11" height="11" viewBox="0 0 11 11"><path d="M10 1.2 L1.5 9.7 M10 4.6 L5 9.6 M10 8 L8.4 9.6" stroke="#a4a4a4" stroke-width="1"/></svg>
<div style="left:0px;top:0px;width:1000px;height:959px;box-sizing:border-box;border:1px solid #dedede;pointer-events:none"></div>
</body></html>
